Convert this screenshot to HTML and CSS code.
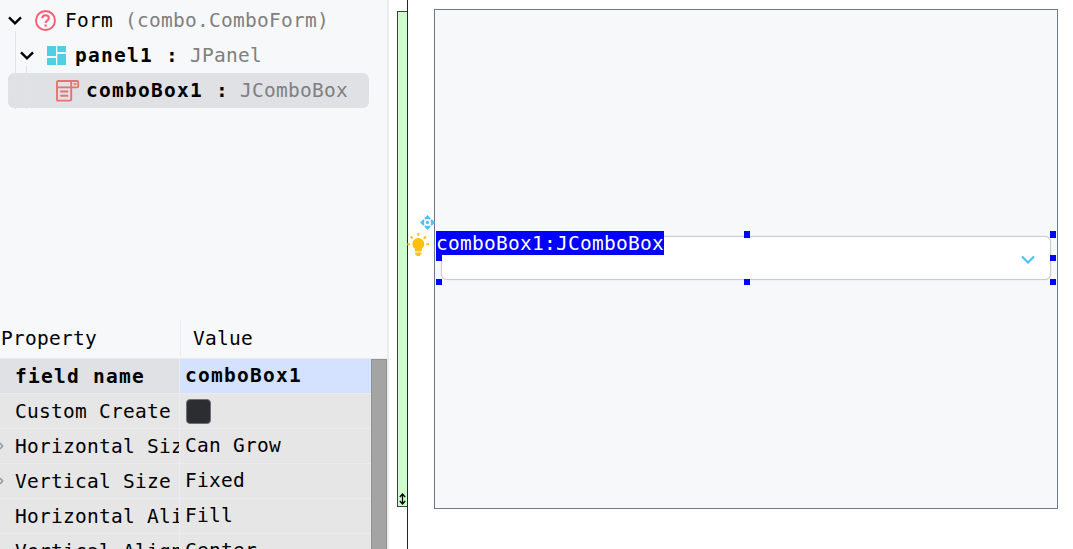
FILE: index.html
```html
<!DOCTYPE html>
<html lang="en">
<head>
<meta charset="utf-8">
<title>Form Designer</title>
<link rel="stylesheet" href="styles.css">
</head>
<body>
<div class="app">
  <aside class="sidebar">
    <div class="tree">
      <div class="node node-form">
        <svg class="arrow" width="14" height="9" viewBox="0 0 14 9"><path d="M1 1.3l6 6 6-6"/></svg>
        <svg class="icon" width="22" height="22" viewBox="0 0 22 22" fill="none" stroke="#ff5a75" stroke-width="1.9"><circle cx="10.500" cy="10.500" r="9.500"/><path d="M7.300 8.300c.1-2 1.500-3.100 3.300-3.100s3.200 1.100 3.200 2.900c0 2.400-3.200 2.500-3.200 4.900" stroke-width="2"/><path d="M9.500 14.500h2.200v2.100H9.500z" fill="#ff5a75" stroke="none"/></svg>
        <span class="label">Form <span class="type">(combo.ComboForm)</span></span>
      </div>
      <div class="node node-panel">
        <svg class="arrow" width="14" height="9" viewBox="0 0 14 9"><path d="M1 1.300l6 6 6-6"/></svg>
        <svg class="icon" width="20" height="20" viewBox="0 0 20 20" fill="#4dd0e4"><path d="M0 0h9v10H0zM10.300 0H19v6h-8.700zM0 12h9v7H0zM10.300 8H19v11h-8.700z"/></svg>
        <span class="label"><b>panel1 : </b><span class="type">JPanel</span></span>
      </div>
      <div class="node node-combo selected">
        <svg class="icon" width="24" height="22" viewBox="0 0 24 22" fill="none" stroke="#e57373" stroke-width="1.900"><path d="M15.200 7.600v11.800q0 1.200-1.200 1.200H2.200Q1 20.600 1 19.400V2.200Q1 1 2.200 1H21q1.200 0 1.200 1.200v4q0 1.200-1.200 1.200H1M15.200 1v6.400M4.200 11.500h8M4.200 15.800h8"/><path d="M17 3.200h4l-2 2.500z" fill="#e57373" stroke="none"/></svg>
        <span class="label"><b>comboBox1 : </b><span class="type">JComboBox</span></span>
      </div>
      <i class="guide guide-outer"></i><i class="guide guide-inner"></i>
    </div>
    <div class="properties">
      <div class="head"><span class="head-name">Property</span><span class="head-value">Value</span></div>
      <div class="body">
        <div class="rows">
          <div class="row active"><div class="name"><b>field name</b></div><div class="value"><b>comboBox1</b></div></div>
          <div class="row"><div class="name">Custom Create</div><div class="value"><span class="check"></span></div></div>
          <div class="row"><div class="name"><svg class="expand" width="4" height="8" viewBox="0 0 4 8"><path d="M0 1L2.600 4 0 7"/></svg>Horizontal Size</div><div class="value">Can Grow</div></div>
          <div class="row"><div class="name"><svg class="expand" width="4" height="8" viewBox="0 0 4 8"><path d="M0 1L2.600 4 0 7"/></svg>Vertical Size</div><div class="value">Fixed</div></div>
          <div class="row"><div class="name">Horizontal Align</div><div class="value">Fill</div></div>
          <div class="row"><div class="name">Vertical Align</div><div class="value">Center</div></div>
        </div>
        <div class="scrollbar"></div>
      </div>
    </div>
  </aside>
  <main class="designer">
    <div class="ruler"><div class="track"><svg width="8" height="13" viewBox="0 0 8 13" fill="none" stroke="#000" stroke-width="1.300"><path d="M4.500 1v10M1.800 4l2.700-3 2.700 3M1.800 8l2.700 3 2.700-3"/></svg></div></div>
    <div class="form"></div>
    <div class="combo"><svg width="14" height="9" viewBox="0 0 14 9"><path d="M1 1.500l6 6 6-6"/></svg></div>
    <span class="tag">comboBox1:JComboBox</span>
    <i class="handle west north"></i><i class="handle west middle"></i><i class="handle west south"></i>
    <i class="handle center north"></i><i class="handle center south"></i>
    <i class="handle east north"></i><i class="handle east middle"></i><i class="handle east south"></i>
    <svg class="move" width="15" height="15" viewBox="0 0 15 15" fill="#4fc3f7"><path d="M7.500 0l3.200 3.200-1 1.200H5.300l-1-1.200zM7.500 15l3.200-3.200-1-1.200H5.300l-1 1.200zM0 7.500l3.200-3.200 1.200 1v4.400l-1.200 1zM15 7.500l-3.200-3.200-1.200 1v4.400l1.200 1z"/><circle cx="7.500" cy="7.500" r="3.200" fill="#fff"/><circle cx="7.500" cy="7.500" r="1.700"/></svg>
    <svg class="bulb" width="23" height="24" viewBox="0 0 23 24" fill="#ffc107"><path d="M11.300 5a6 6 0 0 1 6 6c0 2-1 3.600-2.600 4.800v2.200q0 .6-.6.600H8.500q-.6 0-.6-.6v-2.200a5.800 5.800 0 0 1-2.600-4.800 6 6 0 0 1 6-6zM8 19.600h6.600v1.300q0 .6-.6.600h-.9v1q0 .5-.5.500H10q-.5 0-.5-.5v-1h-.9q-.6 0-.6-.6z"/><path d="M11.300 0v2.800M3.700 3.500l2 2M18.900 3.500l-2 2M.3 11.300h2.900M19.200 11.300h2.900" stroke="#ffc107" stroke-width="2"/></svg>
  </main>
</div>
</body>
</html>
```
FILE: styles.css
```css
* { box-sizing: border-box; }
body { margin: 0; width: 1073px; height: 549px; overflow: hidden; background: #fff; color: #000; font: 19.5px/35px "DejaVu Sans Mono", monospace; letter-spacing: 0.26px; }
b { font-weight: 700; letter-spacing: 1.25px; }
svg { display: block; flex: none; }
.app { display: flex; height: 549px; overflow: hidden; }
.sidebar { width: 389px; flex: none; display: flex; flex-direction: column; background: #f7f8fa; border-right: 2px solid #ebecf0; }
.tree { position: relative; flex: none; height: 320px; padding-top: 3px; }
.node { position: relative; z-index: 1; height: 35px; display: flex; align-items: center; }
.node-form { padding-left: 8px; }
.node-panel { padding-left: 20px; }
.node-combo { margin: 0 18px 0 8px; padding-left: 48px; }
.selected { background: #dfe1e5; border-radius: 6px; }
.arrow { fill: none; stroke: #000; stroke-width: 2.4; }
.node-form .icon { margin: 1px 8px 0 13px; }
.node-panel .icon { margin: 1px 8px 0 13px; }
.node-combo .icon { margin-right: 6px; }
.label { white-space: pre; }
.type { color: #808080; }
.node-panel .type, .node-combo .type { margin-left: -2px; }
.guide { position: absolute; width: 1px; background: #e0e2e6; z-index: 2; }
.guide-outer { left: 15px; top: 31px; height: 78px; }
.guide-inner { left: 26px; top: 66px; height: 43px; }
.properties { flex: 1; min-height: 0; display: flex; flex-direction: column; }
.head { display: flex; height: 38px; flex: none; line-height: 37px; }
.head-name { width: 181px; padding-left: 1px; height: 36px; border-right: 1px solid #ebecf0; }
.head-value { padding-left: 12px; }
.body { display: flex; border-top: 1px solid #ebecf0; flex: 1; min-height: 0; overflow: hidden; }
.rows { width: 371px; overflow: hidden; height: 190px; }
.row { height: 35px; display: flex; background: #e6e6e6; border-bottom: 1px solid #ebecf0; }
.name { position: relative; width: 180px; flex: none; padding-left: 15px; overflow: hidden; white-space: nowrap; border-right: 1px solid #ebecf0; }
.value { flex: 1; padding-left: 5px; padding-bottom: 1px; line-height: 33px; display: flex; align-items: center; }
.active .name { background: #dfe1e5; }
.active .value { background: #d4e2ff; }
.check { width: 25px; height: 25px; border: 1px solid #6c707e; border-radius: 4px; background: #2b2d30; margin: 1px 0 0 1px; }
.expand { position: absolute; left: 0; top: 13px; fill: none; stroke: #8f9da6; stroke-width: 1.5; }
.scrollbar { width: 16px; background: #a4a4a4; border: 1px solid #929292; border-bottom: 0; }
.designer { position: relative; flex: 1; overflow: hidden; }
.ruler { width: 19px; height: 549px; padding: 11px 0 0 8px; border-right: 1px solid #262626; }
.track { width: 10px; height: 496px; background: #ccffcc; border: 1px solid #404040; border-right: 0; display: flex; align-items: flex-end; }
.form { position: absolute; left: 45px; top: 9px; width: 624px; height: 500px; background: #f7f8fa; border: 1px solid #6c7a90; }
.combo { position: absolute; left: 52px; top: 236px; width: 610px; height: 44px; background: #fff; border: 1px solid #c9ccd6; border-radius: 6px; display: flex; align-items: center; justify-content: flex-end; padding-right: 15px; box-shadow: 0 0 1px #c9ccd6; }
.combo svg { fill: none; stroke: #4fc3f7; stroke-width: 2.2; margin-top: 2px; }
.tag { position: absolute; left: 47px; top: 231px; width: 228px; height: 24px; line-height: 26px; background: #00f; color: #fff; white-space: nowrap; }
.handle { position: absolute; width: 6px; height: 6px; background: #00f; }
.west { left: 47px; }
.center { left: 355px; }
.east { left: 661px; }
.north { top: 231px; height: 7px; }
.middle { top: 255px; }
.south { top: 279px; }
.move { position: absolute; left: 31px; top: 215px; }
.bulb { position: absolute; left: 18px; top: 233px; }
```
